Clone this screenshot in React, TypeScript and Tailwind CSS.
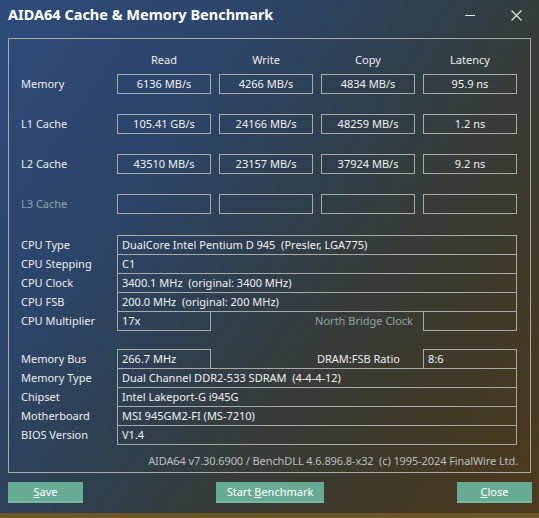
import React from 'react';

const cols = ['Read', 'Write', 'Copy', 'Latency'];

const benchRows = [
  { name: 'Memory', values: ['6136 MB/s', '4266 MB/s', '4834 MB/s', '95.9 ns'] },
  { name: 'L1 Cache', values: ['105.41 GB/s', '24166 MB/s', '48259 MB/s', '1.2 ns'] },
  { name: 'L2 Cache', values: ['43510 MB/s', '23157 MB/s', '37924 MB/s', '9.2 ns'] },
  { name: 'L3 Cache', values: ['', '', '', ''], dim: true },
];

const Label = ({ children, dim }: { children: React.ReactNode; dim?: boolean }) => (
  <div className={`w-[96px] shrink-0 pb-px ${dim ? 'text-[#8fa3a0]' : 'text-[#ececec]'}`}>{children}</div>
);

const Cell = ({ children, className = '' }: { children?: React.ReactNode; className?: string }) => (
  <div className={`h-[20px] border border-[#a9a9a9] px-[4px] pb-px flex items-center text-[#f0f0f0] whitespace-pre ${className}`}>
    {children}
  </div>
);

const InfoRow = ({ label, value }: { label: string; value: string }) => (
  <div className="flex items-center -mt-px">
    <Label>{label}</Label>
    <Cell className="w-[400px]">{value}</Cell>
  </div>
);

export default function App() {
  return (
    <div
      className="relative w-[539px] h-[518px] overflow-hidden flex flex-col text-[11px] leading-none bg-[linear-gradient(125deg,#2d4b7a_0%,#2c4569_28%,#2f3f4a_50%,#3c3a2e_72%,#4d3a1b_100%)]"
      style={{ fontFamily: '"Noto Sans", "Open Sans", sans-serif' }}
    >
      {/* Title bar */}
      <div className="h-[38px] flex items-start justify-between pl-[8px] pr-[17px] pt-[7px]">
        <div className="text-[14.5px] font-bold text-white">AIDA64 Cache &amp; Memory Benchmark</div>
        <div className="flex items-center gap-[36px] pt-[3px]">
          <div className="w-[10px] h-px bg-[#e8e8e8]" />
          <svg width="11" height="11" viewBox="0 0 11 11">
            <path d="M0.5 0.5 L10.5 10.5 M10.5 0.5 L0.5 10.5" stroke="#e8e8e8" strokeWidth="1.1" />
          </svg>
        </div>
      </div>

      {/* Group box */}
      <div className="mx-[8px] w-[523px] h-[435px] border border-[#a9a9a9] pl-[12px] pt-[11px] flex flex-col">
        {/* Column headers */}
        <div className="flex h-[19px] items-center pb-px">
          <div className="w-[96px]" />
          <div className="flex gap-[8px]">
            {cols.map((c) => (
              <div key={c} className="w-[94px] text-center text-[#ececec]">{c}</div>
            ))}
          </div>
        </div>

        {/* Benchmark rows */}
        <div className="flex flex-col gap-[20px] mt-[5px]">
          {benchRows.map((r) => (
            <div key={r.name} className="flex items-center">
              <Label dim={r.dim}>{r.name}</Label>
              <div className="flex gap-[8px]">
                {r.values.map((v, i) => (
                  <Cell key={i} className="w-[94px] justify-center">{v}</Cell>
                ))}
              </div>
            </div>
          ))}
        </div>

        {/* CPU info */}
        <div className="flex flex-col mt-[21px]">
          <div className="flex items-center">
            <Label>CPU Type</Label>
            <Cell className="w-[400px]">DualCore Intel Pentium D 945  (Presler, LGA775)</Cell>
          </div>
          <InfoRow label="CPU Stepping" value="C1" />
          <InfoRow label="CPU Clock" value="3400.1 MHz  (original: 3400 MHz)" />
          <InfoRow label="CPU FSB" value="200.0 MHz  (original: 200 MHz)" />
          <div className="flex items-center -mt-px">
            <Label>CPU Multiplier</Label>
            <Cell className="w-[94px]">17x</Cell>
            <div className="w-[212px] text-right pr-[10px] pb-px text-[#8fa3a0]">North Bridge Clock</div>
            <Cell className="w-[94px]" />
          </div>
        </div>

        {/* Memory info */}
        <div className="flex flex-col mt-[18px]">
          <div className="flex items-center">
            <Label>Memory Bus</Label>
            <Cell className="w-[94px]">266.7 MHz</Cell>
            <div className="w-[212px] text-right pr-[23px] pb-px text-[#ececec]">DRAM:FSB Ratio</div>
            <Cell className="w-[94px]">8:6</Cell>
          </div>
          <InfoRow label="Memory Type" value="Dual Channel DDR2-533 SDRAM  (4-4-4-12)" />
          <InfoRow label="Chipset" value="Intel Lakeport-G i945G" />
          <InfoRow label="Motherboard" value="MSI 945GM2-FI (MS-7210)" />
          <InfoRow label="BIOS Version" value="V1.4" />
        </div>

        <div className="mt-[10px] w-[497px] text-right text-[#b9bec0] whitespace-pre tracking-[-0.1px]">
          AIDA64 v7.30.6900 / BenchDLL 4.6.896.8-x32  (c) 1995-2024 FinalWire Ltd.
        </div>
      </div>

      {/* Buttons */}
      <div className="flex items-start mt-[9px] pl-[8px] h-[31px]">
        <button className="w-[75px] h-[21px] bg-[#67ab95] border-b-2 border-[#74b9a2] text-white flex items-center justify-center">
          <span><u>S</u>ave</span>
        </button>
        <button className="ml-[133px] w-[108px] h-[21px] bg-[#67ab95] border-b-2 border-[#74b9a2] text-white flex items-center justify-center">
          <span>Start <u>B</u>enchmark</span>
        </button>
        <button className="ml-[133px] w-[75px] h-[21px] bg-[#67ab95] border-b-2 border-[#74b9a2] text-white flex items-center justify-center">
          <span><u>C</u>lose</span>
        </button>
      </div>

      <div className="h-[5px] bg-[#6c5526]" />
    </div>
  );
}
